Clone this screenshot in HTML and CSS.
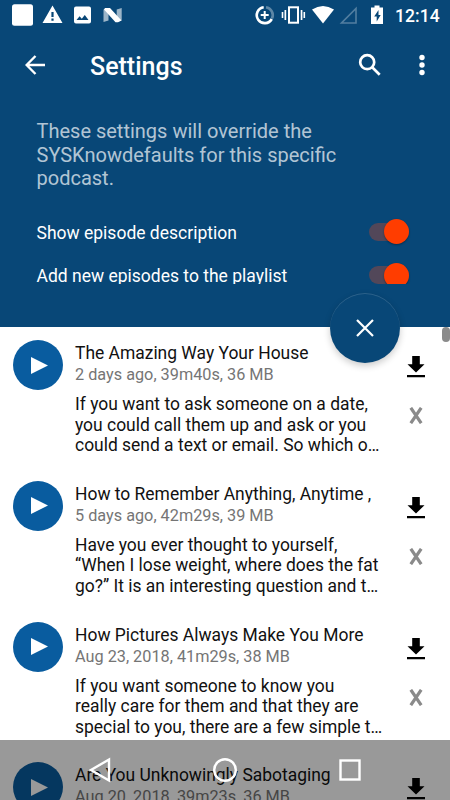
FILE: index.html
```html
<!DOCTYPE html>
<html lang="en">
<head>
    <meta charset="UTF-8">
    <meta name="viewport" content="width=device-width, initial-scale=1.0">
    <title>Settings</title>
    <link rel="stylesheet" href="styles.css">
</head>
<body>
    <svg class="symbols">
        <symbol id="play" viewBox="0 0 17 17"><path d="M0 0v17l17-8.5z" fill="currentColor"/></symbol>
        <symbol id="download" viewBox="0 0 18 22"><path d="M5.200 0h7.600v8.200H17.500L9 16.500.500 8.200h4.700zM0 19h18v2.200H0z" fill="currentColor"/></symbol>
        <symbol id="remove" viewBox="0 0 14 17"><path d="M1.800 .800l10.400 15.400M12.200 .800L1.800 16.200" stroke="currentColor" stroke-width="3.200" fill="none"/></symbol>
    </svg>
    <div class="screen">
        <header class="header">
            <div class="statusbar">
                <!-- notifications on the left, system icons on the right -->
                <svg class="status-icons" width="390" height="31" viewBox="0 0 390 31" fill="#fff">
                    <rect x="12" y="4.300" width="21" height="21.500" rx="2.500"/>
                    <path fill-rule="evenodd" d="M52.5 5.5L62.5 23h-20zM51.400 12v5h2.200v-5zM51.400 18.600v2.200h2.200v-2.200z"/>
                    <path fill-rule="evenodd" d="M76 6.500h13a2 2 0 0 1 2 2v13a2 2 0 0 1-2 2H76a2 2 0 0 1-2-2v-13a2 2 0 0 1 2-2zM76.500 20h12l-3.700-5-3 3.700-2.200-2.500z"/>
                    <path opacity=".6" d="M103.500 9.500l5-1.500v12.500l-5 1.500zM116.700 9.500l5-1.500v12.500l-5 1.500z"/>
                    <path d="M105 8h5l11.500 12.500-3.500 1.700h-2.500L104 9.500z"/>
                    <g fill="none" stroke="#fff" stroke-width="2.600">
                        <path d="M263.700 7.200A8 8 0 1 0 271.800 19"/>
                        <path opacity=".35" d="M266 7.200A8 8 0 0 1 272 18.500"/>
                    </g>
                    <path d="M263.700 11h2v3h3v2h-3v3h-2v-3h-3v-2h3z"/>
                    <rect x="289" y="7.300" width="9" height="15.400" fill="none" stroke="#fff" stroke-width="2"/>
                    <path d="M281.700 12h1.600v6h-1.600zM284.500 10h1.700v10h-1.700zM300.700 10h1.700v10h-1.700zM303.500 12h1.600v6h-1.600z"/>
                    <path d="M312 9.500Q323 2.500 334 9.500L323 23.500z"/>
                    <path d="M341.500 23h14.500V8.500z" fill="none" stroke="#fff" stroke-width="1.600" opacity=".3"/>
                    <path fill-rule="evenodd" d="M374.500 5.500h5v2h3.500V24h-12V7.500h3.500zM378.500 10l-4.300 6.500h2.500v5l4-6.500h-2.200z"/>
                </svg>
                <span class="time">12:14</span>
            </div>
            <div class="toolbar">
                <svg class="back" width="20" height="20" viewBox="0 0 20 20" fill="none" stroke="#fff" stroke-width="2.400"><path d="M20 10H2M10.500 1L1.600 10l8.900 9"/></svg>
                <h1 class="title">Settings</h1>
                <svg class="search" width="24" height="24" viewBox="0 0 24 24" fill="none" stroke="#fff" stroke-width="2.700"><circle cx="9.200" cy="9.200" r="7"/><path d="M14.200 14.200l7.500 7.500"/></svg>
                <svg class="more" width="6" height="22" viewBox="0 0 6 22" fill="#fff"><circle cx="3" cy="3.500" r="2.700"/><circle cx="3" cy="11" r="2.700"/><circle cx="3" cy="18.500" r="2.700"/></svg>
            </div>
            <div class="settings">
                <p class="intro">These settings will override the<br>SYSKnowdefaults for this specific<br>podcast.</p>
                <div class="option">
                    <span>Show episode description</span>
                    <div class="switch"><div class="thumb"></div></div>
                </div>
                <div class="option">
                    <span>Add new episodes to the playlist</span>
                    <div class="switch"><div class="thumb"></div></div>
                </div>
            </div>
            <div class="close">
                <svg width="18" height="18" viewBox="0 0 18 18" fill="none" stroke="#fff" stroke-width="2.200"><path d="M1 1l16 16M17 1L1 17"/></svg>
            </div>
        </header>
        <main class="episodes">
            <div class="scrollbar"></div>
            <article class="episode">
                <div class="play"><svg width="17" height="17"><use href="#play"/></svg></div>
                <div class="info">
                    <h2 class="name">The Amazing Way Your House</h2>
                    <p class="meta">2 days ago, 39m40s, 36 MB</p>
                    <p class="description">If you want to ask someone on a date,<br>you could call them up and ask or you<br>could send a text or email. So which o…</p>
                </div>
                <div class="actions">
                    <svg width="18" height="22"><use href="#download"/></svg>
                    <svg class="remove" width="14" height="17"><use href="#remove"/></svg>
                </div>
            </article>
            <article class="episode">
                <div class="play"><svg width="17" height="17"><use href="#play"/></svg></div>
                <div class="info">
                    <h2 class="name">How to Remember Anything, Anytime ,</h2>
                    <p class="meta">5 days ago, 42m29s, 39 MB</p>
                    <p class="description">Have you ever thought to yourself,<br>“When I lose weight, where does the fat<br>go?” It is an interesting question and t…</p>
                </div>
                <div class="actions">
                    <svg width="18" height="22"><use href="#download"/></svg>
                    <svg class="remove" width="14" height="17"><use href="#remove"/></svg>
                </div>
            </article>
            <article class="episode">
                <div class="play"><svg width="17" height="17"><use href="#play"/></svg></div>
                <div class="info">
                    <h2 class="name">How Pictures Always Make You More</h2>
                    <p class="meta">Aug 23, 2018, 41m29s, 38 MB</p>
                    <p class="description">If you want someone to know you<br>really care for them and that they are<br>special to you, there are a few simple t…</p>
                </div>
                <div class="actions">
                    <svg width="18" height="22"><use href="#download"/></svg>
                    <svg class="remove" width="14" height="17"><use href="#remove"/></svg>
                </div>
            </article>
            <article class="episode">
                <div class="play"><svg width="17" height="17"><use href="#play"/></svg></div>
                <div class="info">
                    <h2 class="name">Are You Unknowingly Sabotaging</h2>
                    <p class="meta">Aug 20, 2018, 39m23s, 36 MB</p>
                </div>
                <div class="actions">
                    <svg width="18" height="22"><use href="#download"/></svg>
                </div>
            </article>
        </main>
        <nav class="navbar">
            <svg width="22" height="26" viewBox="0 0 22 26"><path d="M20 2.500v21L2 13z"/></svg>
            <svg width="24" height="24" viewBox="0 0 24 24"><circle cx="12" cy="12" r="10.800"/></svg>
            <svg width="22" height="22" viewBox="0 0 22 22"><rect x="1.500" y="1.500" width="19" height="19"/></svg>
        </nav>
    </div>
</body>
</html>
```
FILE: styles.css
```css
* {
    box-sizing: border-box;
}
body {
    font-family: Roboto, sans-serif;
    margin: 0;
    background-color: #fff;
}
h1, h2, p {
    margin: 0;
    font-weight: 400;
}
svg {
    display: block;
    flex-shrink: 0;
}
.symbols {
    display: none;
}
.screen {
    position: relative;
    width: 450px;
    height: 800px;
    overflow: hidden;
}
.header {
    position: relative;
    z-index: 1;
    height: 327px;
    background-color: #084777;
    color: #fff;
}
.statusbar {
    display: flex;
    height: 31px;
}
.status-icons {
    width: 390px;
}
.time {
    padding-left: 5px;
    font-size: 17.5px;
    font-weight: 500;
    letter-spacing: 0.1px;
    line-height: 32px;
}
.toolbar {
    display: flex;
    align-items: center;
    height: 68px;
    padding: 0 25px 0 25px;
}
.title {
    margin-left: 45px;
    padding-top: 3px;
    font-size: 25px;
    font-weight: 500;
    line-height: 30px;
}
.search {
    margin-left: auto;
}
.more {
    margin-left: 37px;
}
.settings {
    height: 185px;
    padding: 20px 41px 0 36.5px;
    overflow: hidden;
}
.intro {
    height: 91px;
    padding-top: 1px;
    font-size: 20px;
    line-height: 23.7px;
    color: rgba(255, 255, 255, 0.7);
}
.option {
    display: flex;
    justify-content: space-between;
    align-items: center;
    height: 43.5px;
    font-size: 17.5px;
}
.option span {
    padding-top: 2px;
}
.switch {
    display: flex;
    align-items: center;
    justify-content: flex-end;
    width: 40px;
    height: 18px;
    border-radius: 9px;
    background-color: #524759;
}
.thumb {
    width: 25px;
    height: 25px;
    border-radius: 50%;
    background-color: #ff3d00;
    box-shadow: 0 1px 2px rgba(0, 0, 0, 0.35);
}
.close {
    position: absolute;
    left: 330px;
    bottom: -35.5px;
    display: flex;
    align-items: center;
    justify-content: center;
    width: 70px;
    height: 70px;
    border-radius: 50%;
    background-color: #084777;
    box-shadow: 0 3px 7px rgba(0, 0, 0, 0.2), inset 0 1px 0 rgba(255, 255, 255, 0.15);
}
.episodes {
    position: relative;
}
.scrollbar {
    position: absolute;
    top: 0;
    right: 0;
    width: 8px;
    height: 15px;
    border-radius: 4px;
    background-color: #8b8b8b;
}
.episode {
    display: flex;
    height: 140.8px;
    padding: 13px 25px 0 12.5px;
}
.play {
    display: flex;
    align-items: center;
    justify-content: center;
    width: 50px;
    height: 50px;
    padding-left: 3px;
    border-radius: 50%;
    background-color: #095c9f;
    color: #fff;
}
.info {
    flex: 1;
    padding: 2px 0 0 12.5px;
    white-space: nowrap;
}
.name {
    font-size: 17.45px;
    line-height: 22px;
    color: #111;
}
.meta {
    font-size: 16.25px;
    line-height: 22px;
    color: #757575;
}
.description {
    margin-top: 8px;
    font-size: 17.45px;
    line-height: 20.5px;
    color: #111;
}
.actions {
    display: flex;
    flex-direction: column;
    align-items: center;
    gap: 29px;
    padding-top: 16px;
    color: #000;
}
.remove {
    color: #8a8a8a;
}
.navbar {
    position: absolute;
    left: 0;
    bottom: 0;
    z-index: 2;
    display: flex;
    align-items: center;
    justify-content: space-between;
    width: 450px;
    height: 60px;
    padding: 0 89px;
    background-color: rgba(0, 0, 0, 0.4);
    fill: none;
    stroke: #fff;
    stroke-width: 2.4px;
}
```
